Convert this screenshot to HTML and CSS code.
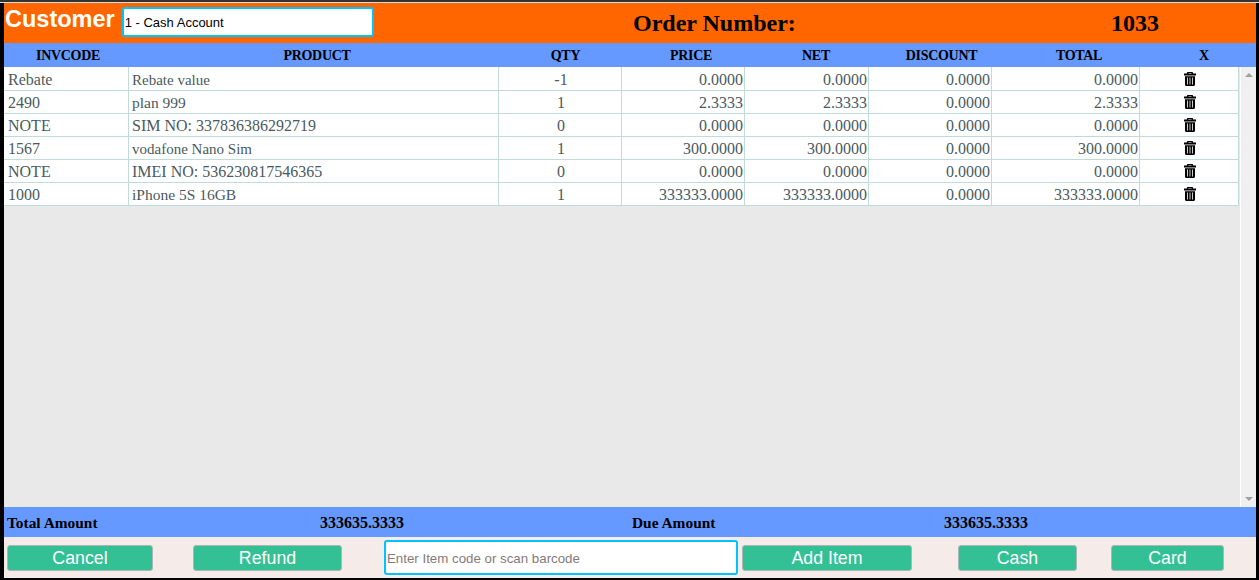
FILE: index.html
```html
<!DOCTYPE html>
<html lang="en">
<head>
<meta charset="utf-8">
<title>Order</title>
<link rel="stylesheet" href="styles.css">
</head>
<body>
<svg class="sprite" width="0" height="0" aria-hidden="true"><symbol id="trash" viewBox="0 0 12 14"><path fill-rule="evenodd" d="M3.400 0h5.200l.7 1.600H12v2H0v-2h2.700zM4.500 1h3l.2.600H4.300zM1 4.200h10v8.600c0 .7-.5 1.200-1.200 1.200H2.200C1.500 14 1 13.500 1 12.800zM3.100 5.600v6.900h.8V5.600zM5.600 5.600v6.900h.8V5.600zM8.100 5.600v6.900h.8V5.600z"/></symbol></svg>
<main class="app">
  <header class="topbar">
    <div class="customer">
      <span class="customer-label">Customer</span>
      <input class="customer-input" type="text" value="1 - Cash Account">
    </div>
    <div class="order-label">Order Number:</div>
    <div class="order-number">1033</div>
  </header>
  <div class="head">
    <table class="head-table">
      <colgroup><col class="h1"><col class="h2"><col class="h3"><col class="h4"><col class="h5"><col class="h6"><col class="h7"><col class="h8"></colgroup>
      <thead><tr><th>INVCODE</th><th>PRODUCT</th><th>QTY</th><th>PRICE</th><th>NET</th><th>DISCOUNT</th><th>TOTAL</th><th>X</th></tr></thead>
    </table>
  </div>
  <section class="list">
    <div class="list-body">
      <table class="items">
        <colgroup><col class="c1"><col class="c2"><col class="c3"><col class="c4"><col class="c5"><col class="c6"><col class="c7"><col class="c8"></colgroup>
        <tbody>
          <tr><td>Rebate</td><td class="prod">Rebate value</td><td class="mid">-1</td><td class="num">0.0000</td><td class="num">0.0000</td><td class="num">0.0000</td><td class="num">0.0000</td><td class="del"><svg class="trash"><use href="#trash"/></svg></td></tr>
          <tr><td>2490</td><td class="prod prod-m">plan 999</td><td class="mid">1</td><td class="num">2.3333</td><td class="num">2.3333</td><td class="num">0.0000</td><td class="num">2.3333</td><td class="del"><svg class="trash"><use href="#trash"/></svg></td></tr>
          <tr><td>NOTE</td><td class="prod prod-l">SIM NO: 337836386292719</td><td class="mid">0</td><td class="num">0.0000</td><td class="num">0.0000</td><td class="num">0.0000</td><td class="num">0.0000</td><td class="del"><svg class="trash"><use href="#trash"/></svg></td></tr>
          <tr><td>1567</td><td class="prod">vodafone Nano Sim</td><td class="mid">1</td><td class="num">300.0000</td><td class="num">300.0000</td><td class="num">0.0000</td><td class="num">300.0000</td><td class="del"><svg class="trash"><use href="#trash"/></svg></td></tr>
          <tr><td>NOTE</td><td class="prod prod-l">IMEI NO: 536230817546365</td><td class="mid">0</td><td class="num">0.0000</td><td class="num">0.0000</td><td class="num">0.0000</td><td class="num">0.0000</td><td class="del"><svg class="trash"><use href="#trash"/></svg></td></tr>
          <tr><td>1000</td><td class="prod prod-m">iPhone 5S 16GB</td><td class="mid">1</td><td class="num">333333.0000</td><td class="num">333333.0000</td><td class="num">0.0000</td><td class="num">333333.0000</td><td class="del"><svg class="trash"><use href="#trash"/></svg></td></tr>
        </tbody>
      </table>
    </div>
    <div class="scrollbar">
      <span class="arrow arrow-up"></span>
      <span class="arrow arrow-down"></span>
    </div>
  </section>
  <div class="totals">
    <span class="t-label">Total Amount</span>
    <span class="t-value">333635.3333</span>
    <span class="t-label t-due">Due Amount</span>
    <span class="t-value">333635.3333</span>
  </div>
  <footer class="actions">
    <button class="btn btn-cancel">Cancel</button>
    <button class="btn btn-refund">Refund</button>
    <input class="scan" type="text" placeholder="Enter Item code or scan barcode">
    <button class="btn btn-add">Add Item</button>
    <button class="btn btn-cash">Cash</button>
    <button class="btn btn-card">Card</button>
  </footer>
</main>
</body>
</html>
```
FILE: styles.css
```css
* { box-sizing: border-box; }
html, body { margin: 0; height: 100%; }
body { background: #000; overflow: hidden; }
.sprite { position: absolute; }
.app {
  display: flex;
  flex-direction: column;
  width: 1259px;
  height: 580px;
  padding: 3px 3px 2px 4px;
  background: linear-gradient(#333 0 2px, #ddd 2px 3px, #000 3px);
  font-family: "Liberation Serif", serif;
}
.topbar {
  display: flex;
  flex: none;
  align-items: center;
  height: 40px;
  background: #ff6600;
}
.customer { display: flex; align-items: center; width: 470px; }
.customer-label {
  margin: -8px 0 0 1px;
  font: bold 23.500px "Liberation Sans", sans-serif;
  color: #fff;
}
.customer-input {
  width: 252px;
  height: 30px;
  margin: -2px 0 0 7px;
  padding: 0 1px;
  border: 2px solid #00c3ff;
  border-radius: 3px;
  background: #fff;
  font: 13px "Liberation Sans", sans-serif;
  color: #000;
  outline: none;
}
.order-label { width: 637px; padding-left: 159px; font-weight: bold; font-size: 24px; color: #000; }
.order-number { font-weight: bold; font-size: 24px; color: #000; }
table { border-collapse: collapse; table-layout: fixed; }
.h1 { width: 128px; }
.h2 { width: 370px; }
.h3 { width: 127px; }
.h4 { width: 124px; }
.h5 { width: 126px; }
.h6 { width: 125px; }
.h7 { width: 150px; }
.h8 { width: 100px; }
.c1 { width: 124.500px; }
.c2 { width: 370px; }
.c3 { width: 123px; }
.c4 { width: 123px; }
.c5 { width: 124px; }
.c6 { width: 123px; }
.c7 { width: 148px; }
.c8 { width: 98.500px; }
.head { flex: none; height: 24px; background: #6699ff; }
.head-table { width: 1250px; }
.head-table th { padding: 2px 0 0; height: 24px; font-size: 14px; letter-spacing: -.3px; font-weight: bold; color: #000; text-align: center; }
.list { display: flex; flex: 1; min-height: 0; background: #e9e9e9; }
.list-body { flex: 1; min-width: 0; }
.items { width: 1234px; background: #fff; }
.items td {
  height: 23px;
  padding: 2px 1px 0;
  border: 1px solid #bfdcd8;
  font-size: 16px;
  line-height: 18px;
  color: #4a5a5c;
  white-space: nowrap;
}
.items tr:first-child td { border-top: 0; padding-top: 3px; }
.items td:first-child { border-left: 0; padding-left: 4px; }
.items td.prod { padding-left: 3px; font-size: 15px; }
.items td.prod-m { font-size: 15.500px; }
.items td.prod-l { font-size: 16px; }
.items td.mid { padding-left: 3px; text-align: center; }
.items td.num { text-align: right; }
.items td.del { padding: 1px 1px 0 4px; }
.items tr:first-child td.del { padding-top: 2px; }
.trash { display: block; width: 12px; height: 14px; margin: -1px auto 0; fill: #000; }
.scrollbar {
  position: relative;
  flex: none;
  width: 16px;
  background: #f0f0f0;
  border-left: 1px solid #fff;
}
.arrow { position: absolute; left: 4px; width: 0; height: 0; border-left: 4px solid transparent; border-right: 4px solid transparent; }
.arrow-up { top: 6px; border-bottom: 4px solid #a0a0a0; }
.arrow-down { bottom: 6px; border-top: 4px solid #a0a0a0; }
.totals {
  display: flex;
  flex: none;
  align-items: center;
  height: 30px;
  padding-top: 1px;
  background: #6699ff;
  font-weight: bold;
  color: #000;
}
.t-label { width: 316px; padding-left: 3px; font-size: 15.400px; }
.t-due { width: 312px; padding-left: 0; }
.t-value { width: 312px; font-size: 16px; }
.actions {
  display: flex;
  flex: none;
  align-items: flex-start;
  height: 41px;
  padding-top: 3px;
  background: #f5ecea;
}
.btn {
  flex: none;
  height: 26px;
  margin-top: 5px;
  padding: 0;
  border: 1px solid #a9b8b4;
  border-radius: 3px;
  background: #33c094;
  font: 17.800px "Liberation Sans", sans-serif;
  color: #fff;
}
.btn-cancel { width: 146px; margin-left: 3px; }
.btn-refund { width: 149px; margin-left: 40px; }
.scan {
  flex: none;
  width: 354px;
  height: 35px;
  margin-left: 42px;
  padding: 1px 1px 0;
  border: 2px solid #00c3ff;
  border-radius: 3px;
  background: #fff;
  font: 13.300px "Liberation Sans", sans-serif;
  outline: none;
}
.scan::placeholder { color: #857a7a; opacity: 1; }
.btn-add { width: 170px; margin-left: 4px; }
.btn-cash { width: 119px; margin-left: 46px; }
.btn-card { width: 113px; margin-left: 34px; }
```
